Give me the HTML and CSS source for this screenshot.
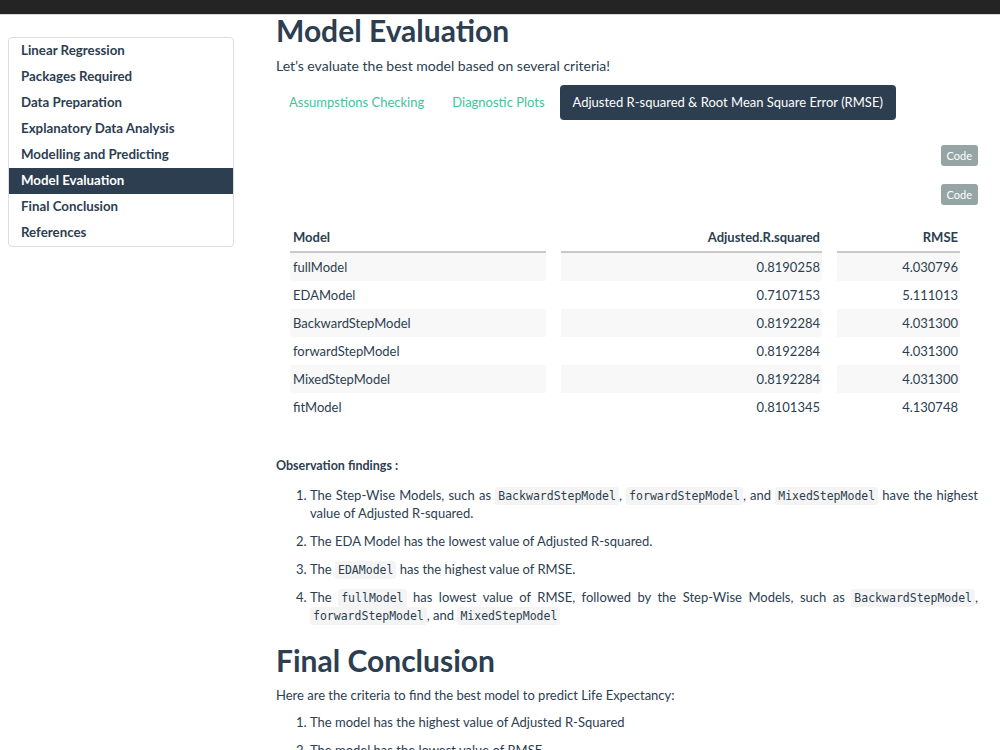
FILE: index.html
```html
<!DOCTYPE html>
<html lang="en">
<head>
  <meta charset="UTF-8">
  <meta name="viewport" content="width=device-width, initial-scale=1.0">
  <title>Life Expectancy - Linear Regression</title>

  <link rel="stylesheet" href="styles.css">

</head>
<body>
  <div class="topbar"></div>

  <div class="page">
    <!--목차-->
    <div class="toc">
      <ul>
        <li>Linear Regression</li>
        <li>Packages Required</li>
        <li>Data Preparation</li>
        <li>Explanatory Data Analysis</li>
        <li>Modelling and Predicting</li>
        <li class="active">Model Evaluation</li>
        <li>Final Conclusion</li>
        <li>References</li>
      </ul>
    </div>

    <div class="main">
      <h1>Model Evaluation</h1>
      <p class="intro">Let’s evaluate the best model based on several criteria!</p>

      <ul class="tabs">
        <li>Assumpstions Checking</li>
        <li>Diagnostic Plots</li>
        <li class="active">Adjusted R-squared &amp; Root Mean Square Error (RMSE)</li>
      </ul>

      <div class="code-row"><button class="code-btn">Code</button></div>
      <div class="code-row"><button class="code-btn">Code</button></div>

      <table class="result">
        <thead>
          <tr>
            <th class="left">Model</th>
            <th class="mid">Adjusted.R.squared</th>
            <th>RMSE</th>
          </tr>
        </thead>
        <tbody>
          <tr><td class="left">fullModel</td><td class="mid">0.8190258</td><td>4.030796</td></tr>
          <tr><td class="left">EDAModel</td><td class="mid">0.7107153</td><td>5.111013</td></tr>
          <tr><td class="left">BackwardStepModel</td><td class="mid">0.8192284</td><td>4.031300</td></tr>
          <tr><td class="left">forwardStepModel</td><td class="mid">0.8192284</td><td>4.031300</td></tr>
          <tr><td class="left">MixedStepModel</td><td class="mid">0.8192284</td><td>4.031300</td></tr>
          <tr><td class="left">fitModel</td><td class="mid">0.8101345</td><td>4.130748</td></tr>
        </tbody>
      </table>

      <p class="findings"><b>Observation findings :</b></p>
      <ol class="points">
        <li>The Step-Wise Models, such as <code>BackwardStepModel</code>, <code>forwardStepModel</code>, and <code>MixedStepModel</code> have the highest value of Adjusted R-squared.</li>
        <li>The EDA Model has the lowest value of Adjusted R-squared.</li>
        <li>The <code>EDAModel</code> has the highest value of RMSE.</li>
        <li>The <code>fullModel</code> has lowest value of RMSE, followed by the Step-Wise Models, such as <code>BackwardStepModel</code>, <code>forwardStepModel</code>, and <code>MixedStepModel</code></li>
      </ol>

      <h1 class="next">Final Conclusion</h1>
      <p>Here are the criteria to find the best model to predict Life Expectancy:</p>
      <ol class="points criteria">
        <li>The model has the highest value of Adjusted R-Squared</li>
        <li>The model has the lowest value of RMSE</li>
      </ol>
    </div>
  </div>
</body>
</html>
```

FILE: styles.css
```css
body{
  margin: 0;
  font-family: Lato, "Open Sans", sans-serif;
  font-size: 13px;
  line-height: 18px;
  color: #2c3e50;
}

/* 화면 위쪽에 고정된 네비게이션 바 */
.topbar{
  position: fixed;
  top: 0;
  left: 0;
  width: 100%;
  height: 14px;
  background-color: #242424;
  border-bottom: 1px solid #d8d8d8;
  z-index: 10;
}

.page{
  display: flex;
  align-items: flex-start;
}

.toc{
  width: 224px;
  margin: 37px 0 0 8px;
  border: 1px solid #dddddd;
  border-radius: 4px;
  flex-shrink: 0;
}

.toc ul{
  list-style-type: none;
  margin: 0;
  padding: 0;
}

.toc li{
  font-size: 13.3px;
  font-weight: bold;
  height: 26px;
  line-height: 24px;
  padding-left: 12px;
}

.toc li.active{
  background-color: #2c3e50;
  color: #ffffff;
}

.main{
  width: 702px;
  margin-left: 42px;
  padding-top: 14px;
}

h1{
  font-size: 30px;
  line-height: 33px;
  font-weight: bold;
  margin: 0 0 9px;
}

h1.next{
  margin-top: 20px;
}

p{
  margin: 0;
}

.intro{
  font-size: 14px;
  line-height: 20px;
}

.tabs{
  list-style-type: none;
  display: flex;
  margin: 9px 0 0;
  padding: 0;
}

.tabs li{
  padding: 8px 13px;
  line-height: 19px;
  margin-right: 2px;
  color: #46c19c;
  border-radius: 4px;
}

.tabs li.active{
  background-color: #2c3e50;
  color: #ffffff;
}

.code-row{
  display: flex;
  justify-content: flex-end;
  margin-top: 25px;
}

.code-row + .code-row{
  margin-top: 18px;
}

.code-btn{
  font-family: Lato, sans-serif;
  font-size: 11px;
  line-height: 15px;
  height: 21px;
  padding: 3px 6px;
  border: none;
  border-radius: 3px;
  background-color: #95a5a6;
  color: #ffffff;
}

.result{
  width: 700px;
  table-layout: fixed;
  border-collapse: separate;
  border-spacing: 15px 0;
  margin: 18px 0 0 -1px;
}

.result th,
.result td{
  text-align: right;
  padding: 0 2px 0 3px;
  height: 28px;
}

.result th{
  font-weight: bold;
  border-bottom: 2px solid #c8c8c8;
}

.result .left{
  text-align: left;
  width: 251px;
}

.result .mid{
  width: 256px;
}

.result tbody tr:nth-child(odd) td{
  background-color: #f8f8f8;
}

.findings{
  margin-top: 36px;
  font-size: 12.5px;
}

.points{
  margin: 11px 0 0;
  padding-left: 34px;
}

.points.criteria{
  margin-top: 9px;
}

.points li{
  margin-bottom: 10px;
  text-align: justify;
}

code{
  font-family: "DejaVu Sans Mono", monospace;
  font-size: 11.5px;
  line-height: 14px;
  background-color: #f4f4f4;
  padding: 2px 3px;
  border-radius: 3px;
}
```
